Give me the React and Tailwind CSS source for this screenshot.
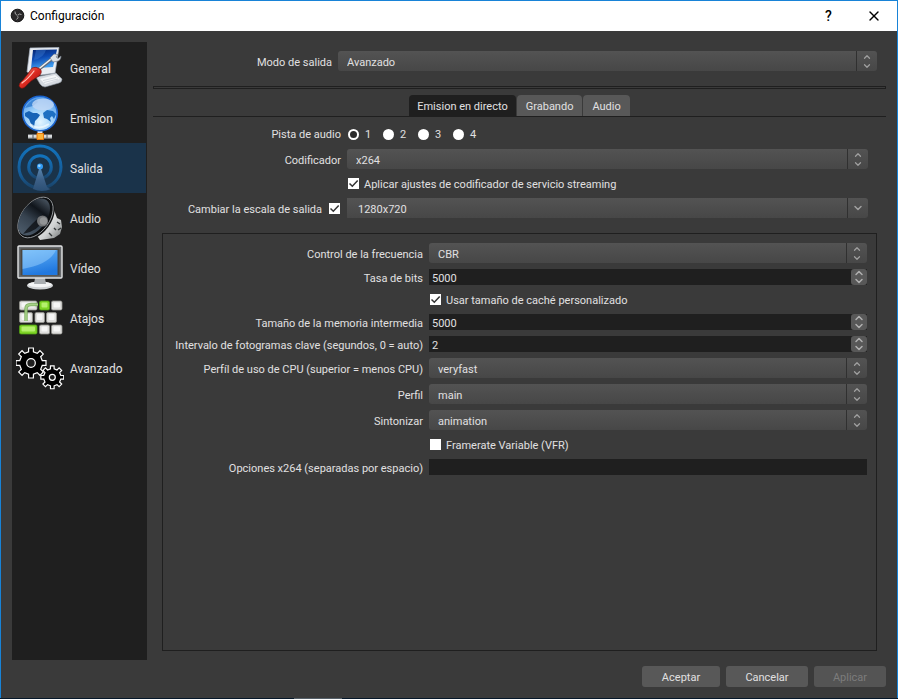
import { useState } from 'react';
import { ChevronDown, ChevronUp, X } from 'lucide-react';

function gearPath(cx, cy, outer, inner, teeth) {
  const step = (Math.PI * 2) / teeth;
  const points = [];
  for (let i = 0; i < teeth; i++) {
    const a = i * step - Math.PI / 2;
    [
      [inner, -0.27],
      [outer, -0.2],
      [outer, 0.2],
      [inner, 0.27],
    ].forEach(([r, t]) => {
      points.push(`${(cx + r * Math.cos(a + t * step)).toFixed(2)} ${(cy + r * Math.sin(a + t * step)).toFixed(2)}`);
    });
  }
  return `M${points.join('L')}Z`;
}

function GeneralIcon() {
  return (
    <svg viewBox="0 0 48 48" className="size-12">
      <defs>
        <linearGradient id="gen-screen" x1="0" y1="0" x2="0.3" y2="1">
          <stop offset="0" stopColor="#06246e" />
          <stop offset="0.5" stopColor="#0d4bb4" />
          <stop offset="1" stopColor="#3f9df0" />
        </linearGradient>
        <linearGradient id="gen-handle" x1="0" y1="0" x2="1" y2="1">
          <stop offset="0" stopColor="#ff8a78" />
          <stop offset="0.5" stopColor="#dc2a20" />
          <stop offset="1" stopColor="#8e0e0a" />
        </linearGradient>
      </defs>
      <path d="M20 33L40 29L46 35Q46 38 43 39L29 43Q26 43 24 40Z" fill="#d5dae0" stroke="#8b95a1" strokeWidth="0.6" />
      <path d="M24 35L39 31L44 35L29 40Z" fill="#f4f6f8" />
      <path d="M27 36.500L40 33.500M28 38.500L42 35" stroke="#b9c1cb" strokeWidth="0.6" />
      <path d="M14 4L43 3.500L39 29L25 31L11 28Z" fill="#e9edf2" stroke="#a8b2c0" strokeWidth="0.7" />
      <path d="M17 6L41 5.500L37 23L15 24.500Z" fill="url(#gen-screen)" />
      <path d="M20 6L30 5.800Q28 14 18 16Z" fill="#3f7fd8" opacity="0.4" />
      <path d="M22 26L37 14" stroke="#646c76" strokeWidth="3.200" />
      <path d="M22 25.500L37 13.500" stroke="#f1f3f5" strokeWidth="1.600" />
      <path d="M34 14L38 10L42 10.500L40 13L42 14.500L45 12Q45 17 40 17.500L37 18Z" fill="#dce1e6" stroke="#727b86" strokeWidth="0.7" />
      <path d="M16 24Q20 22 24 25Q27 28 23 32Q15 36 9 43Q5 46 3 42Q3 39 7 36Q12 30 16 24Z" fill="url(#gen-handle)" stroke="#7d100c" strokeWidth="0.7" />
      <path d="M18 27Q12 35 6 39" stroke="#ffc5ba" strokeWidth="1.200" fill="none" strokeLinecap="round" />
    </svg>
  );
}

function StreamIcon() {
  return (
    <svg viewBox="0 0 48 48" className="size-12">
      <defs>
        <radialGradient id="globe" cx="0.5" cy="0.75" r="0.75">
          <stop offset="0" stopColor="#e4f5ff" />
          <stop offset="0.5" stopColor="#a0d2fa" />
          <stop offset="1" stopColor="#4a96e8" />
        </radialGradient>
      </defs>
      <path d="M21.500 36H26.500V41H21.500Z" fill="#dfe3e6" />
      <path d="M12 40.500H36V44.500H12Z" fill="#b9bdc0" />
      <path d="M12 41.500H36V42.500H12Z" fill="#fafafa" />
      <path d="M17 40.500V44.500M31 40.500V44.500" stroke="#55595c" />
      <path d="M21 39.500H27.500V45.500H21Z" fill="#fbb53a" stroke="#e8780c" />
      <circle cx="24" cy="19.500" r="17.300" fill="url(#globe)" stroke="#1b64cf" strokeWidth="1.600" />
      <path d="M9 19L13 17L17 19L21 19L24 21L22 24L19 27L18 33L15 30L13 25L9 22Z" fill="#1763b6" />
      <path d="M27 19L31 16L37 17L40 20L38 25L36 22L34 24L35 28L31 25L28 24Z" fill="#1e70c2" />
      <path d="M9 14Q13 7 20 5L22 8L17 12L13 13Z" fill="#3d86d6" />
      <ellipse cx="27" cy="10.500" rx="11" ry="6" fill="#c3d8f5" opacity="0.8" />
      <path d="M14 30Q22 37 33 30" stroke="#fff" strokeWidth="2" opacity="0.6" fill="none" />
    </svg>
  );
}

function OutputIcon() {
  return (
    <svg viewBox="0 0 48 48" className="size-12">
      <defs>
        <linearGradient id="ring" x1="0" y1="0" x2="0" y2="1">
          <stop offset="0" stopColor="#1273bd" />
          <stop offset="0.65" stopColor="#155c98" />
          <stop offset="1" stopColor="#1a4368" />
        </linearGradient>
        <linearGradient id="mast" x1="0" y1="0" x2="0" y2="1">
          <stop offset="0" stopColor="#5683ad" />
          <stop offset="0.5" stopColor="#3c5f86" />
          <stop offset="1" stopColor="#2b4f74" />
        </linearGradient>
      </defs>
      <circle cx="24" cy="23" r="21" fill="none" stroke="url(#ring)" strokeWidth="3" />
      <circle cx="24" cy="23" r="11.300" fill="none" stroke="url(#ring)" strokeWidth="3" />
      <path d="M23 25H25L31 43Q33 45 35 45Q26 49 17 45Z" fill="url(#mast)" />
      <circle cx="24" cy="22.600" r="3" fill="#329bf3" />
      <circle cx="23.300" cy="21.700" r="1.300" fill="#9bd4ff" />
    </svg>
  );
}

function SpeakerIcon() {
  return (
    <svg viewBox="0 0 48 48" className="size-12">
      <defs>
        <linearGradient id="cone" x1="0" y1="0" x2="1" y2="0">
          <stop offset="0" stopColor="#4d5c6b" />
          <stop offset="0.4" stopColor="#36424f" />
          <stop offset="0.7" stopColor="#10151b" />
          <stop offset="1" stopColor="#46515d" />
        </linearGradient>
        <linearGradient id="magnet" x1="0" y1="0" x2="1" y2="1">
          <stop offset="0" stopColor="#fff" />
          <stop offset="0.6" stopColor="#d0d2d2" />
          <stop offset="1" stopColor="#6b6f70" />
        </linearGradient>
      </defs>
      <path d="M38 16L41 24L45 26L46 33L44 40L38 44L24 46L20 40Z" fill="url(#magnet)" />
      <path d="M41 28L44 30M38 34L40 36M33 39L36 42M42 36L45 34" stroke="#343839" strokeWidth="1.400" />
      <ellipse cx="20.500" cy="24.500" rx="24" ry="14.500" transform="rotate(-54 20.500 24.500)" fill="#141516" />
      <ellipse cx="19.500" cy="23.500" rx="23" ry="14" transform="rotate(-54 19.500 23.500)" fill="#0d0f11" stroke="#a5a9ac" strokeWidth="0.8" />
      <ellipse cx="18" cy="23" rx="21" ry="12.500" transform="rotate(-54 18 23)" fill="url(#cone)" />
      <path d="M27 20Q15 30 7 40Q22 37 29 25Z" fill="#080a0d" opacity="0.7" />
      <circle cx="26.500" cy="27" r="5.500" fill="#737577" />
      <circle cx="27.500" cy="27" r="3.800" fill="#929495" />
    </svg>
  );
}

function MonitorIcon() {
  return (
    <svg viewBox="0 0 48 48" className="size-12">
      <defs>
        <linearGradient id="lcd" x1="0" y1="0" x2="0.3" y2="1">
          <stop offset="0" stopColor="#63b3f7" />
          <stop offset="1" stopColor="#2178df" />
        </linearGradient>
      </defs>
      <ellipse cx="24" cy="41.500" rx="13" ry="4" fill="#cfd2d4" />
      <ellipse cx="24" cy="40.500" rx="12" ry="2.800" fill="#f3f4f5" />
      <path d="M19 34H29L30 40H18Z" fill="#a9adb0" />
      <rect x="2" y="2" width="44" height="32" rx="1" fill="#676a6d" stroke="#e3e5e6" strokeWidth="1.400" />
      <rect x="4.500" y="4.500" width="39" height="27" fill="#4a4640" />
      <rect x="6.500" y="6" width="35" height="25" fill="url(#lcd)" />
      <path d="M6.500 6H40Q34 20 6.500 25Z" fill="#a3d7ff" opacity="0.45" />
    </svg>
  );
}

const keyCaps = [
  [3.5, 7, 17.5, 9, false],
  [23.5, 7, 10, 9, true],
  [35.5, 7, 10.5, 9, false],
  [3.5, 18.5, 13, 10, false],
  [19, 18.5, 9.5, 10, false],
  [30.5, 18.5, 10, 10, false],
  [3.5, 31, 17.5, 9, true],
  [23.5, 31, 10, 9, false],
  [35.5, 31, 10.5, 9, false],
];

function HotkeysIcon() {
  return (
    <svg viewBox="0 0 48 48" className="size-12">
      {keyCaps.map(([x, y, w, h, green]) => (
        <g key={`${x}-${y}`}>
          <rect x={x} y={y} width={w} height={h} rx="1.500" fill={green ? '#7fd427' : '#dededc'} stroke={green ? '#4f9f12' : '#94948f'} strokeWidth="0.8" />
          <rect x={x + 2} y={y + 1.5} width={w - 4} height={h - 4} rx="1" fill={green ? '#b4f06c' : '#f6f6f5'} />
        </g>
      ))}
      <path d="M10 27V15Q10 10.500 15 10.500H22" fill="none" stroke="#75a855" strokeWidth="3.500" opacity="0.85" />
      <path d="M10 27V15Q10 10.500 15 10.500H22" fill="none" stroke="#a5d186" strokeWidth="1.600" />
    </svg>
  );
}

function GearsIcon() {
  return (
    <svg viewBox="0 0 48 48" className="size-12" fill="#000" stroke="#fff" strokeWidth="1.200">
      <path d={gearPath(15, 19, 15.2, 11.5, 8)} />
      <circle cx="15" cy="19" r="4.300" fill="#1f1f1f" />
      <path d={gearPath(36.3, 33.3, 11.6, 8.7, 8)} />
      <circle cx="36.300" cy="33.300" r="3" fill="#1f1f1f" />
    </svg>
  );
}

function ObsLogo() {
  return (
    <svg viewBox="0 0 16 16" className="size-4">
      <circle cx="8.500" cy="7.500" r="6.300" fill="#2a282a" stroke="#111" />
      <path d="M6 3.500Q5.500 6.500 8.500 7.500M12.500 6.500Q10 5 8.500 7.500M7.500 11.500Q10 10 8.500 7.500" fill="none" stroke="#a5a5a5" />
      <circle cx="8.500" cy="7.500" r="1" fill="#555" />
    </svg>
  );
}

const sections = [
  { name: 'General', Icon: GeneralIcon },
  { name: 'Emision', Icon: StreamIcon },
  { name: 'Salida', Icon: OutputIcon },
  { name: 'Audio', Icon: SpeakerIcon },
  { name: 'Vídeo', Icon: MonitorIcon },
  { name: 'Atajos', Icon: HotkeysIcon },
  { name: 'Avanzado', Icon: GearsIcon },
];

function Dropdown({ id, options, editable }) {
  return (
    <div className="relative h-5">
      <select
        id={id}
        className={
          editable
            ? 'block h-5 w-full appearance-none rounded-r-[3px] bg-linear-to-b from-[#535353] to-[#474747] pt-[3px] pr-6 pl-[11px] outline-none'
            : 'block h-5 w-full appearance-none rounded-[3px] bg-linear-to-b from-[#535353] to-[#474747] pt-[3px] pr-6 pl-[9px] outline-none'
        }
      >
        {options.map((option) => (
          <option key={option}>{option}</option>
        ))}
      </select>
      <span className="pointer-events-none absolute inset-y-0 right-0 flex w-[21px] flex-col items-center justify-center border-l border-[#303030] text-[#a0a0a0]">
        {editable ? (
          <ChevronDown className="size-3" strokeWidth={3} />
        ) : (
          <>
            <ChevronUp className="size-2.5 -mb-px" strokeWidth={3} />
            <ChevronDown className="size-2.5" strokeWidth={3} />
          </>
        )}
      </span>
    </div>
  );
}

function NumberBox({ id, initial }) {
  const [value, setValue] = useState(initial);
  return (
    <div className="flex h-4 bg-[#1f1f1f]">
      <input
        id={id}
        inputMode="numeric"
        value={value}
        onChange={(e) => setValue(e.target.value)}
        className="h-4 min-w-0 flex-1 bg-transparent pt-[3px] pl-[3px] outline-none"
      />
      <span className="flex w-4 flex-col items-center rounded-[3px] bg-[#585858] text-[#b0b0b0]">
        <button type="button" aria-label="Aumentar" onClick={() => setValue(Number(value) + 1)} className="flex h-2 w-4 items-center justify-center">
          <ChevronUp className="size-3" strokeWidth={3} />
        </button>
        <button type="button" aria-label="Reducir" onClick={() => setValue(Number(value) - 1)} className="flex h-2 w-4 items-center justify-center">
          <ChevronDown className="size-3" strokeWidth={3} />
        </button>
      </span>
    </div>
  );
}

function Tick({ id, checked }) {
  return (
    <span className="grid size-[13px] shrink-0 place-items-center">
      <input id={id} type="checkbox" defaultChecked={checked} className="peer col-start-1 row-start-1 size-[11px] appearance-none bg-white" />
      <svg viewBox="0 0 11 11" className="pointer-events-none invisible col-start-1 row-start-1 size-[11px] peer-checked:visible">
        <path d="M1.500 5.500L4.300 8.200L9.700 2.500" fill="none" stroke="#333" strokeWidth="1.500" />
      </svg>
    </span>
  );
}

function CheckRow({ id, checked, children }) {
  return (
    <div className="col-start-2 flex h-[17px] items-center gap-1">
      <Tick id={id} checked={checked} />
      <label htmlFor={id} className="pt-0.5">
        {children}
      </label>
    </div>
  );
}

function Label({ htmlFor, children }) {
  return (
    <label htmlFor={htmlFor} className="-mb-[3px] text-right whitespace-nowrap">
      {children}
    </label>
  );
}

function Sidebar() {
  const [current, setCurrent] = useState('Salida');
  return (
    <nav className="w-[135px] shrink-0 border border-[#1f1f1f] bg-[#1f1f1f]">
      {sections.map(({ name, Icon }) => (
        <button
          key={name}
          type="button"
          onClick={() => setCurrent(name)}
          className={
            name === current
              ? 'flex h-[50px] w-full items-center gap-1.5 bg-[#1a334a] pl-[3px] text-left text-[12px]'
              : 'flex h-[50px] w-full items-center gap-1.5 pl-[3px] text-left text-[12px]'
          }
        >
          <Icon />
          <span className="pt-0.5">{name}</span>
        </button>
      ))}
    </nav>
  );
}

function Tabs() {
  const [tab, setTab] = useState('Emision en directo');
  return (
    <div role="tablist" className="flex justify-center gap-px border-b border-[#1f1f1f]">
      {['Emision en directo', 'Grabando', 'Audio'].map((name) => (
        <button
          key={name}
          type="button"
          role="tab"
          aria-selected={tab === name}
          onClick={() => setTab(name)}
          className={
            tab === name
              ? 'h-[21px] rounded-t-[4px] bg-[#1f1f1f] px-2 pt-0.5'
              : 'h-[21px] rounded-t-[4px] bg-[#585858] px-[9px] pt-0.5'
          }
        >
          {name}
        </button>
      ))}
    </div>
  );
}

function EncoderSettings() {
  return (
    <section className="mx-[9px] mt-[15px] flex-1 border border-[#1f1f1f] py-[9px] pr-[9px] pl-2">
      <div className="grid grid-cols-[252px_minmax(0,1fr)] items-center gap-1.5">
        <Label htmlFor="rate">Control de la frecuencia</Label>
        <Dropdown id="rate" options={['CBR', 'ABR', 'VBR', 'CRF']} />
        <Label htmlFor="bitrate">Tasa de bits</Label>
        <NumberBox id="bitrate" initial="5000" />
        <CheckRow id="cache" checked>
          Usar tamaño de caché personalizado
        </CheckRow>
        <Label htmlFor="buffer">Tamaño de la memoria intermedia</Label>
        <NumberBox id="buffer" initial="5000" />
        <Label htmlFor="keyint">Intervalo de fotogramas clave (segundos, 0 = auto)</Label>
        <NumberBox id="keyint" initial="2" />
        <Label htmlFor="preset">Perfíl de uso de CPU (superior = menos CPU)</Label>
        <Dropdown id="preset" options={['veryfast', 'faster', 'fast', 'medium']} />
        <Label htmlFor="profile">Perfil</Label>
        <Dropdown id="profile" options={['main', 'baseline', 'high']} />
        <Label htmlFor="tune">Sintonizar</Label>
        <Dropdown id="tune" options={['animation', 'film', 'grain']} />
        <CheckRow id="vfr">Framerate Variable (VFR)</CheckRow>
        <Label htmlFor="x264opts">Opciones x264 (separadas por espacio)</Label>
        <input id="x264opts" className="h-4 w-full bg-[#1f1f1f] px-[3px] outline-none" />
      </div>
    </section>
  );
}

function OutputPage() {
  return (
    <main className="flex min-w-0 flex-1 flex-col">
      <div className="mt-[9px] mr-[9px] grid grid-cols-[179px_minmax(0,1fr)] items-center gap-x-1.5">
        <Label htmlFor="mode">Modo de salida</Label>
        <Dropdown id="mode" options={['Avanzado', 'Simple']} />
      </div>
      <div className="mt-[15px] mb-1.5 h-[3px] border border-[#1f1f1f]" />
      <Tabs />
      <div className="mt-[9px] mr-[18px] grid grid-cols-[188px_minmax(0,1fr)] items-center gap-1.5">
        <span className="text-right">Pista de audio</span>
        <div className="flex h-[17px] items-center">
          {[1, 2, 3, 4].map((n) => (
            <label key={n} className="flex w-[35px] items-center gap-1.5 pl-px">
              <input
                type="radio"
                name="track"
                defaultChecked={n === 1}
                className="size-[11px] appearance-none rounded-full bg-white checked:border-2 checked:border-white checked:bg-[#2a2a2a]"
              />
              {n}
            </label>
          ))}
        </div>
        <Label htmlFor="encoder">Codificador</Label>
        <Dropdown id="encoder" options={['x264', 'NVENC H.264']} />
        <CheckRow id="enforce" checked>
          Aplicar ajustes de codificador de servicio streaming
        </CheckRow>
        <div className="flex items-center justify-end gap-1.5">
          <Label htmlFor="rescale">Cambiar la escala de salida</Label>
          <Tick id="rescale" checked />
        </div>
        <Dropdown id="scale" options={['1280x720', '1920x1080', '852x480']} editable />
      </div>
      <EncoderSettings />
    </main>
  );
}

function App() {
  return (
    <div className="flex min-h-screen flex-col bg-[#3a3a3a] font-[Roboto,sans-serif] text-[11px] leading-4 text-[#e1e0e1]">
      <div className="flex flex-1 flex-col border-x border-t border-[#1883d7]">
        <header className="flex h-[30px] items-center bg-white pl-2 text-[12px] text-black">
          <ObsLogo />
          <h1 className="ml-[5px] flex-1">Configuración</h1>
          <button type="button" aria-label="Ayuda" className="w-[45px] text-center text-[14px] font-medium">
            ?
          </button>
          <button type="button" aria-label="Cerrar" className="flex w-[46px] justify-center">
            <X className="size-4" strokeWidth={2} />
          </button>
        </header>
        <div className="flex flex-1 flex-col p-[11px]">
          <div className="flex flex-1 gap-1.5">
            <Sidebar />
            <div className="flex min-w-0 flex-1 pb-[9px]">
              <OutputPage />
            </div>
          </div>
          <footer className="mt-1.5 flex justify-end gap-1.5">
            <button type="button" className="h-[21px] w-[78px] rounded-[3px] bg-[#585858] pt-0.5">
              Aceptar
            </button>
            <button type="button" className="h-[21px] w-[82px] rounded-[3px] bg-[#585858] pt-0.5">
              Cancelar
            </button>
            <button type="button" disabled className="h-[21px] w-[72px] rounded-[3px] bg-[#545454] pt-0.5 text-[#7c7c7c]">
              Aplicar
            </button>
          </footer>
        </div>
      </div>
      <div className="h-px bg-[#06182a] pl-[294px]">
        <div className="h-px w-12 bg-[#566069]" />
      </div>
    </div>
  );
}

export default App;
